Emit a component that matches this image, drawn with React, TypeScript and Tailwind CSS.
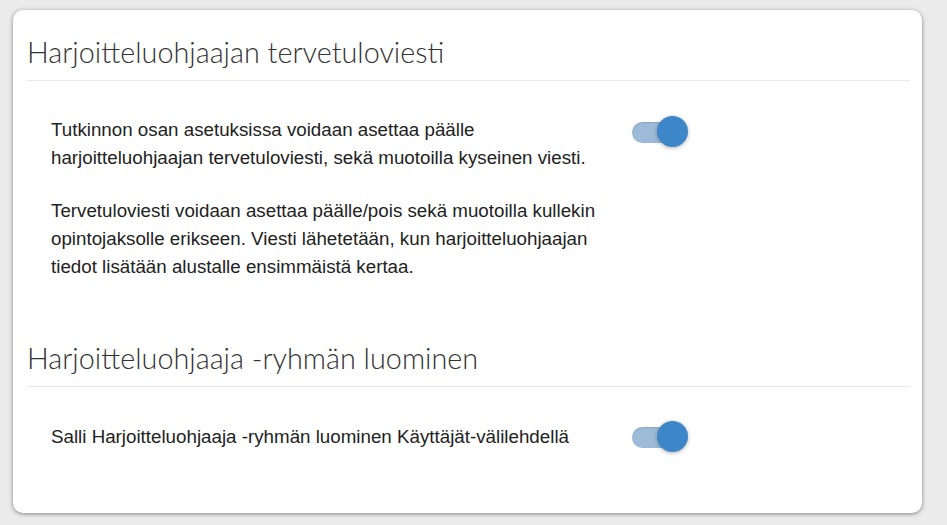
function Toggle() {
  return (
    <div className="relative w-[56px] h-[32px] shrink-0 ml-[11px]">
      <div className="absolute left-0 top-[6px] w-[44px] h-[21px] rounded-full bg-[#9dbbd9] shadow-[inset_0_1px_2px_rgba(0,0,0,0.12)]" />
      <div className="absolute left-[25px] top-0 w-[31px] h-[31px] rounded-full bg-[#3d87c9] shadow-[0_1px_4px_rgba(0,0,0,0.3)]" />
    </div>
  );
}

export default function App() {
  return (
    <div className="min-h-[525px] bg-[#ebebeb] pt-[10px] pl-[13px] pr-[25px] pb-[12px]">
      <div className="bg-white rounded-[10px] shadow-[0_1px_4px_rgba(0,0,0,0.45)] h-[503px] pl-[14px] pr-[12px] pt-[22px]">
        <h2 className="font-['Lato',sans-serif] font-light text-[28.8px] leading-[40px] text-[#333] border-b border-[#e8e8e8] pb-[8px]">
          Harjoitteluohjaajan tervetuloviesti
        </h2>
        <div className="flex pl-[24px] pt-[35px] font-['Liberation_Sans',Arial,sans-serif] text-[18.75px] leading-[28px] text-[#222]">
          <div className="w-[570px]">
            <p>
              Tutkinnon osan asetuksissa voidaan asettaa päälle harjoitteluohjaajan tervetuloviesti, sekä muotoilla kyseinen viesti.
            </p>
            <p className="mt-[25px]">
              Tervetuloviesti voidaan asettaa päälle/pois sekä muotoilla kullekin opintojaksolle erikseen. Viesti lähetetään, kun harjoitteluohjaajan tiedot lisätään alustalle ensimmäistä kertaa.
            </p>
          </div>
          <Toggle />
        </div>
        <h2 className="mt-[57px] font-['Lato',sans-serif] font-light text-[28.8px] leading-[40px] text-[#333] border-b border-[#e8e8e8] pb-[8px]">
          Harjoitteluohjaaja -ryhmän luominen
        </h2>
        <div className="flex items-center pl-[24px] pt-[34px] font-['Liberation_Sans',Arial,sans-serif] text-[18.75px] leading-[28px] text-[#222]">
          <div className="w-[570px]">
            <p>Salli Harjoitteluohjaaja -ryhmän luominen Käyttäjät-välilehdellä</p>
          </div>
          <Toggle />
        </div>
      </div>
    </div>
  );
}
